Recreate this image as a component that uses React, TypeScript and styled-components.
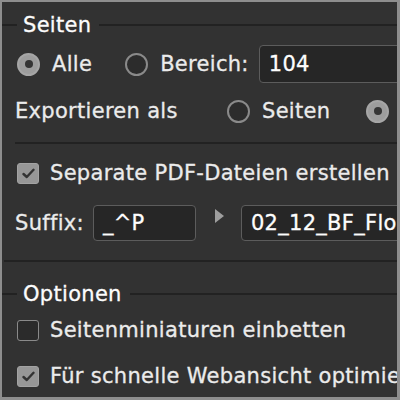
import styled, { createGlobalStyle } from "styled-components";

const GlobalStyle = createGlobalStyle`
  html, body {
    margin: 0;
    padding: 0;
    background: #323232;
  }
`;

const Panel = styled.div`
  width: 400px;
  height: 400px;
  box-sizing: border-box;
  overflow: hidden;
  background: #323232;
  border-style: solid;
  border-color: #8e8e8e;
  border-width: 2px 3px 3px 2px;
  font-family: "DejaVu Sans", "Liberation Sans", sans-serif;
  font-size: 21px;
  letter-spacing: 0.3px;
  -webkit-text-stroke: 0.3px currentColor;
  color: #ebebeb;
  display: flex;
  flex-direction: column;
`;

const Legend = styled.div<{ $h: number; $mt?: number }>`
  height: ${(p) => p.$h}px;
  margin-top: ${(p) => p.$mt ?? 0}px;
  display: flex;
  align-items: center;
  flex-shrink: 0;

  &::before {
    content: "";
    width: 15px;
    height: 2px;
    background: #222;
    margin-right: 6px;
  }

  &::after {
    content: "";
    flex: 1;
    height: 2px;
    background: #222;
    margin-left: 8px;
  }
`;

const LegendText = styled.span`
  color: #fcfcfc;
  line-height: 1;
`;

const Row = styled.div<{ $h: number; $pl: number; $mt?: number }>`
  height: ${(p) => p.$h}px;
  margin-top: ${(p) => p.$mt ?? 0}px;
  padding-left: ${(p) => p.$pl}px;
  display: flex;
  align-items: center;
  flex-shrink: 0;
  white-space: nowrap;
`;

const Divider = styled.div<{ $ml: number; $mt: number }>`
  height: 2px;
  flex-shrink: 0;
  margin-left: ${(p) => p.$ml}px;
  margin-top: ${(p) => p.$mt}px;
  background: #222;
`;

const Radio = styled.span<{ $on?: boolean; $ml?: number }>`
  width: 23px;
  height: 23px;
  box-sizing: border-box;
  border-radius: 50%;
  flex-shrink: 0;
  margin-left: ${(p) => p.$ml ?? 0}px;
  display: flex;
  align-items: center;
  justify-content: center;
  background: ${(p) => (p.$on ? "#9d9d9d" : "#2c2c2c")};
  border: 2px solid ${(p) => (p.$on ? "#a6a6a6" : "#8a8a8a")};

  &::after {
    content: "";
    display: ${(p) => (p.$on ? "block" : "none")};
    width: 8px;
    height: 8px;
    border-radius: 50%;
    background: #353535;
  }
`;

const Check = styled.span<{ $on?: boolean }>`
  width: 22px;
  height: 21px;
  box-sizing: border-box;
  border-radius: 3px;
  flex-shrink: 0;
  display: flex;
  align-items: center;
  justify-content: center;
  background: ${(p) => (p.$on ? "#979797" : "#2b2b2b")};
  border: 1.5px solid ${(p) => (p.$on ? "#a3a3a3" : "#8a8a8a")};
`;

const Label = styled.span<{ $ml?: number; $w?: number }>`
  margin-left: ${(p) => p.$ml ?? 0}px;
  ${(p) => (p.$w ? `width: ${p.$w}px; flex-shrink: 0;` : "")}
  line-height: 1;
`;

const Field = styled.div<{ $w?: number; $h: number; $ml: number }>`
  height: ${(p) => p.$h}px;
  ${(p) => (p.$w ? `width: ${p.$w}px;` : "width: 200px;")}
  margin-left: ${(p) => p.$ml}px;
  box-sizing: border-box;
  flex-shrink: 0;
  background: #262626;
  border: 1.5px solid #5c5c5c;
  border-radius: 4px;
  padding-left: 9px;
  display: flex;
  align-items: center;
  color: #fdfdfd;
`;

const Arrow = styled.span`
  width: 0;
  height: 0;
  margin-left: 19px;
  margin-top: -14px;
  border-top: 7.5px solid transparent;
  border-bottom: 7.5px solid transparent;
  border-left: 9px solid #9e9e9e;
  flex-shrink: 0;
`;

const CheckMark = () => (
  <svg width="13" height="11" viewBox="0 0 13 11">
    <path
      d="M1.5 6 L4.8 9 L11.5 1.8"
      fill="none"
      stroke="#333"
      strokeWidth="2.4"
      strokeLinecap="round"
      strokeLinejoin="round"
    />
  </svg>
);

export default function App() {
  return (
    <>
      <GlobalStyle />
      <Panel>
        <Legend $h={46}>
          <LegendText>Seiten</LegendText>
        </Legend>
        <Row $h={32} $pl={15}>
          <Radio $on />
          <Label $ml={12}>Alle</Label>
          <Radio $ml={33} />
          <Label $ml={12}>Bereich:</Label>
          <Field $h={38} $ml={10}>104</Field>
        </Row>
        <Row $h={62} $pl={13}>
          <Label $w={212}>Exportieren als</Label>
          <Radio />
          <Label $ml={12}>Seiten</Label>
          <Radio $on $ml={36} />
        </Row>
        <Divider $ml={13} $mt={0} />
        <Row $h={58} $pl={15}>
          <Check $on>
            <CheckMark />
          </Check>
          <Label $ml={11}>Separate PDF-Dateien erstellen</Label>
        </Row>
        <Row $h={42} $pl={13}>
          <Label>Suffix:</Label>
          <Field $w={103} $h={36} $ml={9}>_^P</Field>
          <Arrow />
          <Field $h={36} $ml={17}>02_12_BF_Flora.pdf</Field>
        </Row>
        <Divider $ml={2} $mt={16} />
        <Legend $h={32} $mt={16}>
          <LegendText>Optionen</LegendText>
        </Legend>
        <Row $h={40} $pl={15}>
          <Check />
          <Label $ml={11}>Seitenminiaturen einbetten</Label>
        </Row>
        <Row $h={52} $pl={15}>
          <Check $on>
            <CheckMark />
          </Check>
          <Label $ml={11}>Für schnelle Webansicht optimieren</Label>
        </Row>
      </Panel>
    </>
  );
}
